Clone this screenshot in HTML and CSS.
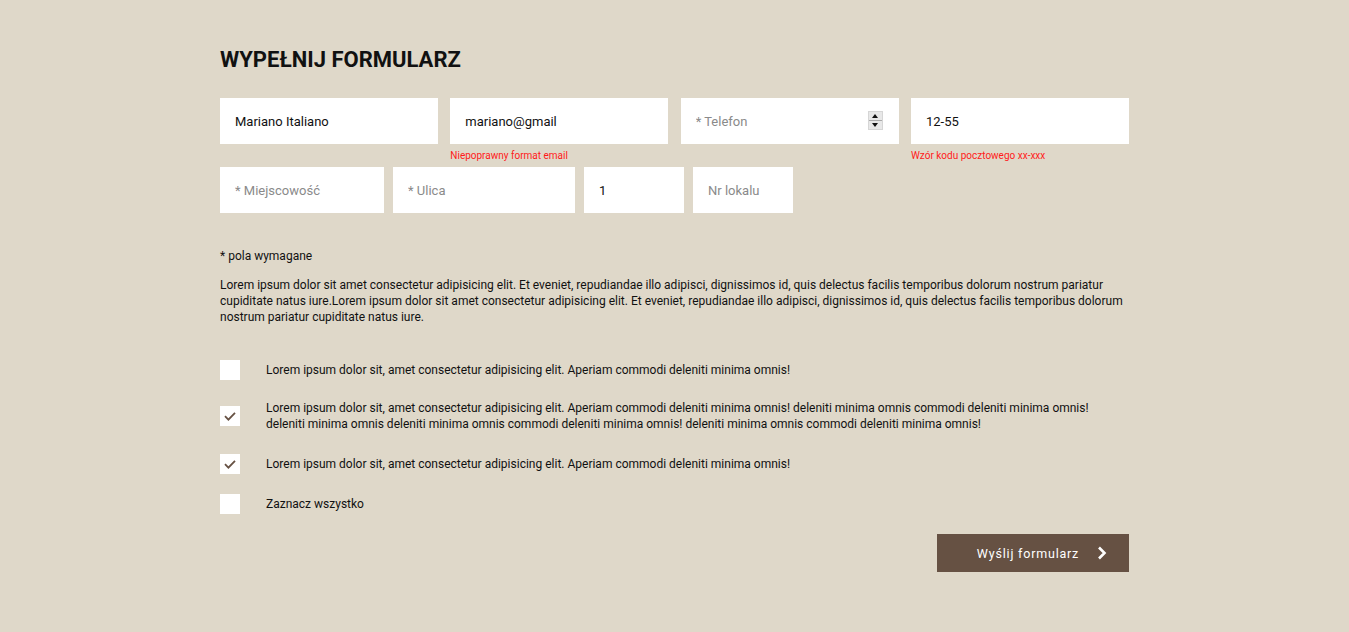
FILE: index.html
```html
<!DOCTYPE html>
<html lang="pl">
<head>
<meta charset="utf-8">
<title>Wypełnij formularz</title>
<link rel="stylesheet" href="styles.css">
</head>
<body>
<main class="wrap">
  <h1 class="title">WYPEŁNIJ FORMULARZ</h1>

  <div class="row row-4">
    <div class="field">
      <input class="input" type="text" value="Mariano Italiano">
      <div class="error"></div>
    </div>
    <div class="field">
      <input class="input" type="text" value="mariano@gmail">
      <div class="error">Niepoprawny format email</div>
    </div>
    <div class="field">
      <div class="input-wrap">
        <input class="input" type="text" placeholder="* Telefon">
        <span class="spin"><span class="spin-up"></span><span class="spin-down"></span></span>
      </div>
      <div class="error"></div>
    </div>
    <div class="field">
      <input class="input" type="text" value="12-55">
      <div class="error">Wzór kodu pocztowego xx-xxx</div>
    </div>
  </div>

  <div class="row row-addr">
    <input class="input w-city" type="text" placeholder="* Miejscowość">
    <input class="input w-street" type="text" placeholder="* Ulica">
    <input class="input w-small" type="text" value="1">
    <input class="input w-small" type="text" placeholder="Nr lokalu">
  </div>

  <p class="req">* pola wymagane</p>
  <p class="lead">Lorem ipsum dolor sit amet consectetur adipisicing elit. Et eveniet, repudiandae illo adipisci, dignissimos id, quis delectus facilis temporibus dolorum nostrum pariatur cupiditate natus iure.Lorem ipsum dolor sit amet consectetur adipisicing elit. Et eveniet, repudiandae illo adipisci, dignissimos id, quis delectus facilis temporibus dolorum nostrum pariatur cupiditate natus iure.</p>

  <div class="checks">
    <label class="check">
      <span class="box"></span>
      <span class="check-text">Lorem ipsum dolor sit, amet consectetur adipisicing elit. Aperiam commodi deleniti minima omnis!</span>
    </label>
    <label class="check check-long">
      <span class="box"><svg class="tick" viewBox="0 0 20 20" width="20" height="20"><path d="M5 10.2 L8.4 13.6 L15 6.8" fill="none" stroke="#665143" stroke-width="1.8"/></svg></span>
      <span class="check-text">Lorem ipsum dolor sit, amet consectetur adipisicing elit. Aperiam commodi deleniti minima omnis! deleniti minima omnis commodi deleniti minima omnis! deleniti minima omnis deleniti minima omnis commodi deleniti minima omnis! deleniti minima omnis commodi deleniti minima omnis!</span>
    </label>
    <label class="check">
      <span class="box"><svg class="tick" viewBox="0 0 20 20" width="20" height="20"><path d="M5 10.2 L8.4 13.6 L15 6.8" fill="none" stroke="#665143" stroke-width="1.8"/></svg></span>
      <span class="check-text">Lorem ipsum dolor sit, amet consectetur adipisicing elit. Aperiam commodi deleniti minima omnis!</span>
    </label>
    <label class="check">
      <span class="box"></span>
      <span class="check-text">Zaznacz wszystko</span>
    </label>
  </div>

  <div class="actions">
    <button class="submit" type="button">
      <span>Wyślij formularz</span>
      <svg viewBox="0 0 10 14" width="10" height="14"><path d="M2 1.5 L7.5 7 L2 12.5" fill="none" stroke="#fff" stroke-width="2.6"/></svg>
    </button>
  </div>
</main>
</body>
</html>
```

FILE: styles.css
```css
* { box-sizing: border-box; }
html, body { margin: 0; padding: 0; }
body {
  background: #dfd8c9;
  font-family: Roboto, "Liberation Sans", Arial, sans-serif;
  color: #111;
  font-size: 12px;
}
.wrap {
  width: 909px;
  margin: 0 auto;
  padding-top: 47px;
  padding-bottom: 40px;
}
.title {
  margin: 0 0 25px;
  font-size: 22px;
  line-height: 26px;
  font-weight: 700;
  color: #111;
  letter-spacing: 0;
}
.row { display: flex; }
.row-4 {
  display: grid;
  grid-template-columns: repeat(4, 1fr);
  column-gap: 12.3px;
}
.field { display: flex; flex-direction: column; }
.input-wrap { position: relative; }
.input {
  display: block;
  width: 100%;
  height: 46px;
  border: 0;
  outline: none;
  background: #fff;
  padding: 0 15px;
  font-family: Roboto, "Liberation Sans", Arial, sans-serif;
  font-size: 13px;
  color: #111;
}
.input::placeholder { color: #8a8a8a; }
.error {
  height: 23px;
  line-height: 23px;
  font-size: 10px;
  color: #ff1a1a;
}
.spin {
  position: absolute;
  left: 187px;
  top: 13px;
  width: 15px;
  height: 19px;
  background: #e8e8e8;
  border: 1px solid #d6d6d6;
  display: flex;
  flex-direction: column;
}
.spin-up, .spin-down {
  flex: 1;
  position: relative;
}
.spin-up { border-bottom: 1px solid #aaa; }
.spin-up::after, .spin-down::after {
  content: "";
  position: absolute;
  left: 50%;
  top: 50%;
  transform: translate(-50%, -50%);
  border-left: 3.5px solid transparent;
  border-right: 3.5px solid transparent;
}
.spin-up::after { border-bottom: 4px solid #111; }
.spin-down::after { border-top: 4px solid #111; }
.row-addr { gap: 9px; }
.w-city { width: 164px; }
.w-street { width: 182px; }
.w-small { width: 100px; }
.req {
  margin: 35px 0 13px;
  line-height: 16px;
  font-size: 12px;
}
.lead {
  margin: 0 0 35px;
  line-height: 16px;
  font-size: 12px;
}
.checks {
  display: flex;
  flex-direction: column;
  gap: 20px;
}
.check {
  display: flex;
  align-items: center;
  gap: 26px;
  line-height: 16px;
  font-size: 12px;
  padding-right: 20px;
}
.check-long { margin-bottom: 2px; }
.box {
  flex: 0 0 20px;
  width: 20px;
  height: 20px;
  background: #fff;
  display: block;
}
.tick { display: block; }
.actions {
  display: flex;
  justify-content: flex-end;
  margin-top: 20px;
}
.submit {
  width: 192px;
  height: 38px;
  border: 0;
  background: #665143;
  color: #fff;
  font-family: Roboto, "Liberation Sans", Arial, sans-serif;
  font-size: 12.5px;
  font-weight: 400;
  letter-spacing: 0.8px;
  display: flex;
  align-items: center;
  justify-content: center;
  gap: 18px;
  padding: 0 0 0 18px;
  cursor: pointer;
}
.submit svg { display: block; }
```
